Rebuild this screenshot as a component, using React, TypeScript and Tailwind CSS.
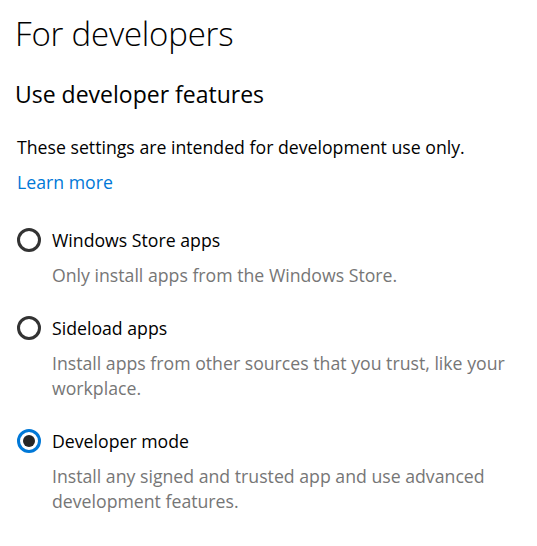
import React from "react";

const options = [
  {
    label: "Windows Store apps",
    desc: "Only install apps from the Windows Store.",
    checked: false,
  },
  {
    label: "Sideload apps",
    desc: "Install apps from other sources that you trust, like your workplace.",
    checked: false,
  },
  {
    label: "Developer mode",
    desc: "Install any signed and trusted app and use advanced development features.",
    checked: true,
  },
];

function Radio({ checked }: { checked: boolean }) {
  if (checked) {
    return (
      <span className="flex h-6 w-6 shrink-0 items-center justify-center rounded-full border-[3px] border-[#0078d7]">
        <span className="h-3 w-3 rounded-full bg-[#262626]" />
      </span>
    );
  }
  return <span className="h-6 w-6 shrink-0 rounded-full border-[3px] border-[#333333]" />;
}

export default function App() {
  return (
    <div className="h-[546px] w-[537px] bg-white font-['Open_Sans',sans-serif] text-black">
      <div className="px-[15px] pt-[12px]">
        <h1 className="text-[33px] font-light leading-[44px] tracking-[-0.2px]">For developers</h1>
        <h2 className="mt-[22px] text-[23px] font-normal leading-[32px]">Use developer features</h2>
        <p className="mt-[25px] pl-[2px] text-[17.7px] leading-[24px]">
          These settings are intended for development use only.
        </p>
        <a href="#" className="mt-[11px] block pl-[2px] text-[17.7px] leading-[24px] text-[#0078d7]">
          Learn more
        </a>
        <ul className="mt-[34px] flex flex-col gap-[28px] pl-[2px]">
          {options.map((o) => (
            <li key={o.label}>
              <div className="flex items-center gap-[11px]">
                <Radio checked={o.checked} />
                <span className="text-[17.7px] leading-[24px]">{o.label}</span>
              </div>
              <p className="mt-[11px] pl-[35px] text-[17.7px] leading-[25px] text-[#767676]">
                {o.desc}
              </p>
            </li>
          ))}
        </ul>
      </div>
    </div>
  );
}
